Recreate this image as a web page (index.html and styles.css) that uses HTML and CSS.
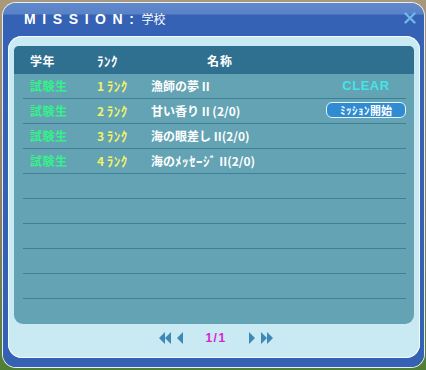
FILE: index.html
```html
<!DOCTYPE html>
<html lang="ja">
<head>
  <meta charset="UTF-8" />
  <title>MISSION</title>
  <link rel="stylesheet" href="styles.css">
</head>
<body>
  <div class="window">
    <div class="titlebar">
      <h1>MISSION:<span>学校</span></h1>
      <svg class="close" width="12" height="12" viewBox="0 0 12 12">
        <path d="M1.5 1.5 L10.5 10.5 M10.5 1.5 L1.5 10.5" stroke="#72b6ec" stroke-width="2.4" stroke-linecap="round"/>
      </svg>
    </div>

    <div class="panel">
      <div class="table">
        <div class="head">
          <span class="c-grade">学年</span>
          <span class="c-rank"><span class="kana">ﾗﾝｸ</span></span>
          <span class="c-name">名称</span>
        </div>

        <div class="row">
          <span class="c-grade">試験生</span>
          <span class="c-rank">1 <span class="kana">ﾗﾝｸ</span></span>
          <span class="c-name">漁師の夢 II</span>
          <span class="c-act clear">CLEAR</span>
        </div>
        <div class="row">
          <span class="c-grade">試験生</span>
          <span class="c-rank">2 <span class="kana">ﾗﾝｸ</span></span>
          <span class="c-name">甘い香り II (2/0)</span>
          <span class="c-act"><button class="start"><span class="kana">ﾐｯｼｮﾝ</span>開始</button></span>
        </div>
        <div class="row">
          <span class="c-grade">試験生</span>
          <span class="c-rank">3 <span class="kana">ﾗﾝｸ</span></span>
          <span class="c-name">海の眼差し II(2/0)</span>
        </div>
        <div class="row">
          <span class="c-grade">試験生</span>
          <span class="c-rank">4 <span class="kana">ﾗﾝｸ</span></span>
          <span class="c-name">海の<span class="kana">ﾒｯｾｰｼﾞ</span> II(2/0)</span>
        </div>
        <div class="row"></div>
        <div class="row"></div>
        <div class="row"></div>
        <div class="row"></div>
        <div class="row"></div>
        <div class="row"></div>
      </div>

      <div class="pager">
        <svg width="28" height="12" viewBox="0 0 28 12">
          <path d="M6 0 L0 6 L6 12 Z M12 0 L6 6 L12 12 Z M24 0 L18 6 L24 12 Z" fill="#3e88b8"/>
        </svg>
        <span class="page">1/1</span>
        <svg width="28" height="12" viewBox="0 0 28 12">
          <path d="M4 0 L10 6 L4 12 Z M16 0 L22 6 L16 12 Z M22 0 L28 6 L22 12 Z" fill="#3e88b8"/>
        </svg>
      </div>
    </div>
  </div>
</body>
</html>
```

FILE: styles.css
```css
* {
  margin: 0;
  padding: 0;
  box-sizing: border-box;
}

html, body {
  width: 426px;
  height: 370px;
  overflow: hidden;
}

body {
  background: linear-gradient(180deg, #a8987c 0%, #8a7d60 60%, #4f7f34 100%);
  font-family: "Noto Sans CJK JP", "Noto Sans", sans-serif;
  padding: 3px 2px 3px 3px;
}

.window {
  height: 364px;
  border-radius: 13px;
  background: linear-gradient(180deg, #6088cc 0, #5a83c7 11px, #3562b5 12px, #3461b4 100%);
  box-shadow: 0 0 0 1px #e8eef6;
  padding: 0 4px 9px 5px;
  display: flex;
  flex-direction: column;
}

.titlebar {
  height: 33px;
  display: flex;
  align-items: center;
  justify-content: space-between;
  padding: 0 4px 0 16px;
}

.titlebar h1 {
  color: #ffffff;
  font-family: "Liberation Sans", sans-serif;
  font-size: 14px;
  font-weight: bold;
  letter-spacing: 6.6px;
  margin-top: -2px;
}

.titlebar h1 span {
  font-family: "Noto Sans CJK JP", sans-serif;
  font-size: 12px;
  font-weight: normal;
  letter-spacing: 0;
  margin-left: 1px;
}

.close {
  margin-top: -3px;
}

.panel {
  flex: 1;
  background: #c9e9f3;
  border-radius: 14px;
  box-shadow: inset 0 0 0 1px #f2fbff;
  padding: 10px 6px 0 6px;
  display: flex;
  flex-direction: column;
}

.table {
  background: #63a3b3;
  border-radius: 5px 5px 9px 9px;
  overflow: hidden;
  padding-bottom: 1px;
}

.head {
  height: 28px;
  background: #2f7090;
  display: flex;
  align-items: center;
  padding-left: 16px;
  color: #ffffff;
  font-size: 12px;
  font-weight: bold;
  letter-spacing: 1px;
}

.row {
  height: 25px;
  margin: 0 8px 0 9px;
  padding-left: 7px;
  border-bottom: 1px solid #3f8097;
  display: flex;
  align-items: center;
  font-size: 12px;
  font-weight: bold;
  padding-bottom: 2px;
}

.row:last-child {
  border-bottom: none;
  height: 24px;
}

.kana {
  font-size: 13px;
  letter-spacing: 0.5px;
}

.c-grade {
  width: 67px;
  color: #36f08a;
  letter-spacing: 0.5px;
}

.c-rank {
  width: 54px;
  color: #f2f26a;
}

.c-name {
  flex: 1;
  color: #ffffff;
}

.head .c-grade,
.head .c-rank {
  color: #ffffff;
}

.head .c-name {
  padding-left: 56px;
}

.c-act {
  width: 80px;
  display: flex;
  justify-content: center;
}

.clear {
  color: #44e4e8;
  font-family: "Liberation Sans", sans-serif;
  font-size: 13px;
  font-weight: bold;
  letter-spacing: 0.5px;
}

.start {
  width: 80px;
  height: 16px;
  border: 1px solid #e6f4fc;
  border-radius: 6px;
  background: #2f8cd2;
  color: #ffffff;
  font-family: "Noto Sans CJK JP", sans-serif;
  font-size: 11px;
  font-weight: bold;
  line-height: 13px;
}

.start .kana {
  font-size: 11px;
}

.pager {
  height: 27px;
  display: flex;
  align-items: center;
  justify-content: center;
  gap: 18px;
  padding-left: 4px;
}

.page {
  color: #d424d4;
  font-family: "Liberation Sans", sans-serif;
  font-size: 12px;
  font-weight: bold;
  letter-spacing: 1.5px;
}
```
